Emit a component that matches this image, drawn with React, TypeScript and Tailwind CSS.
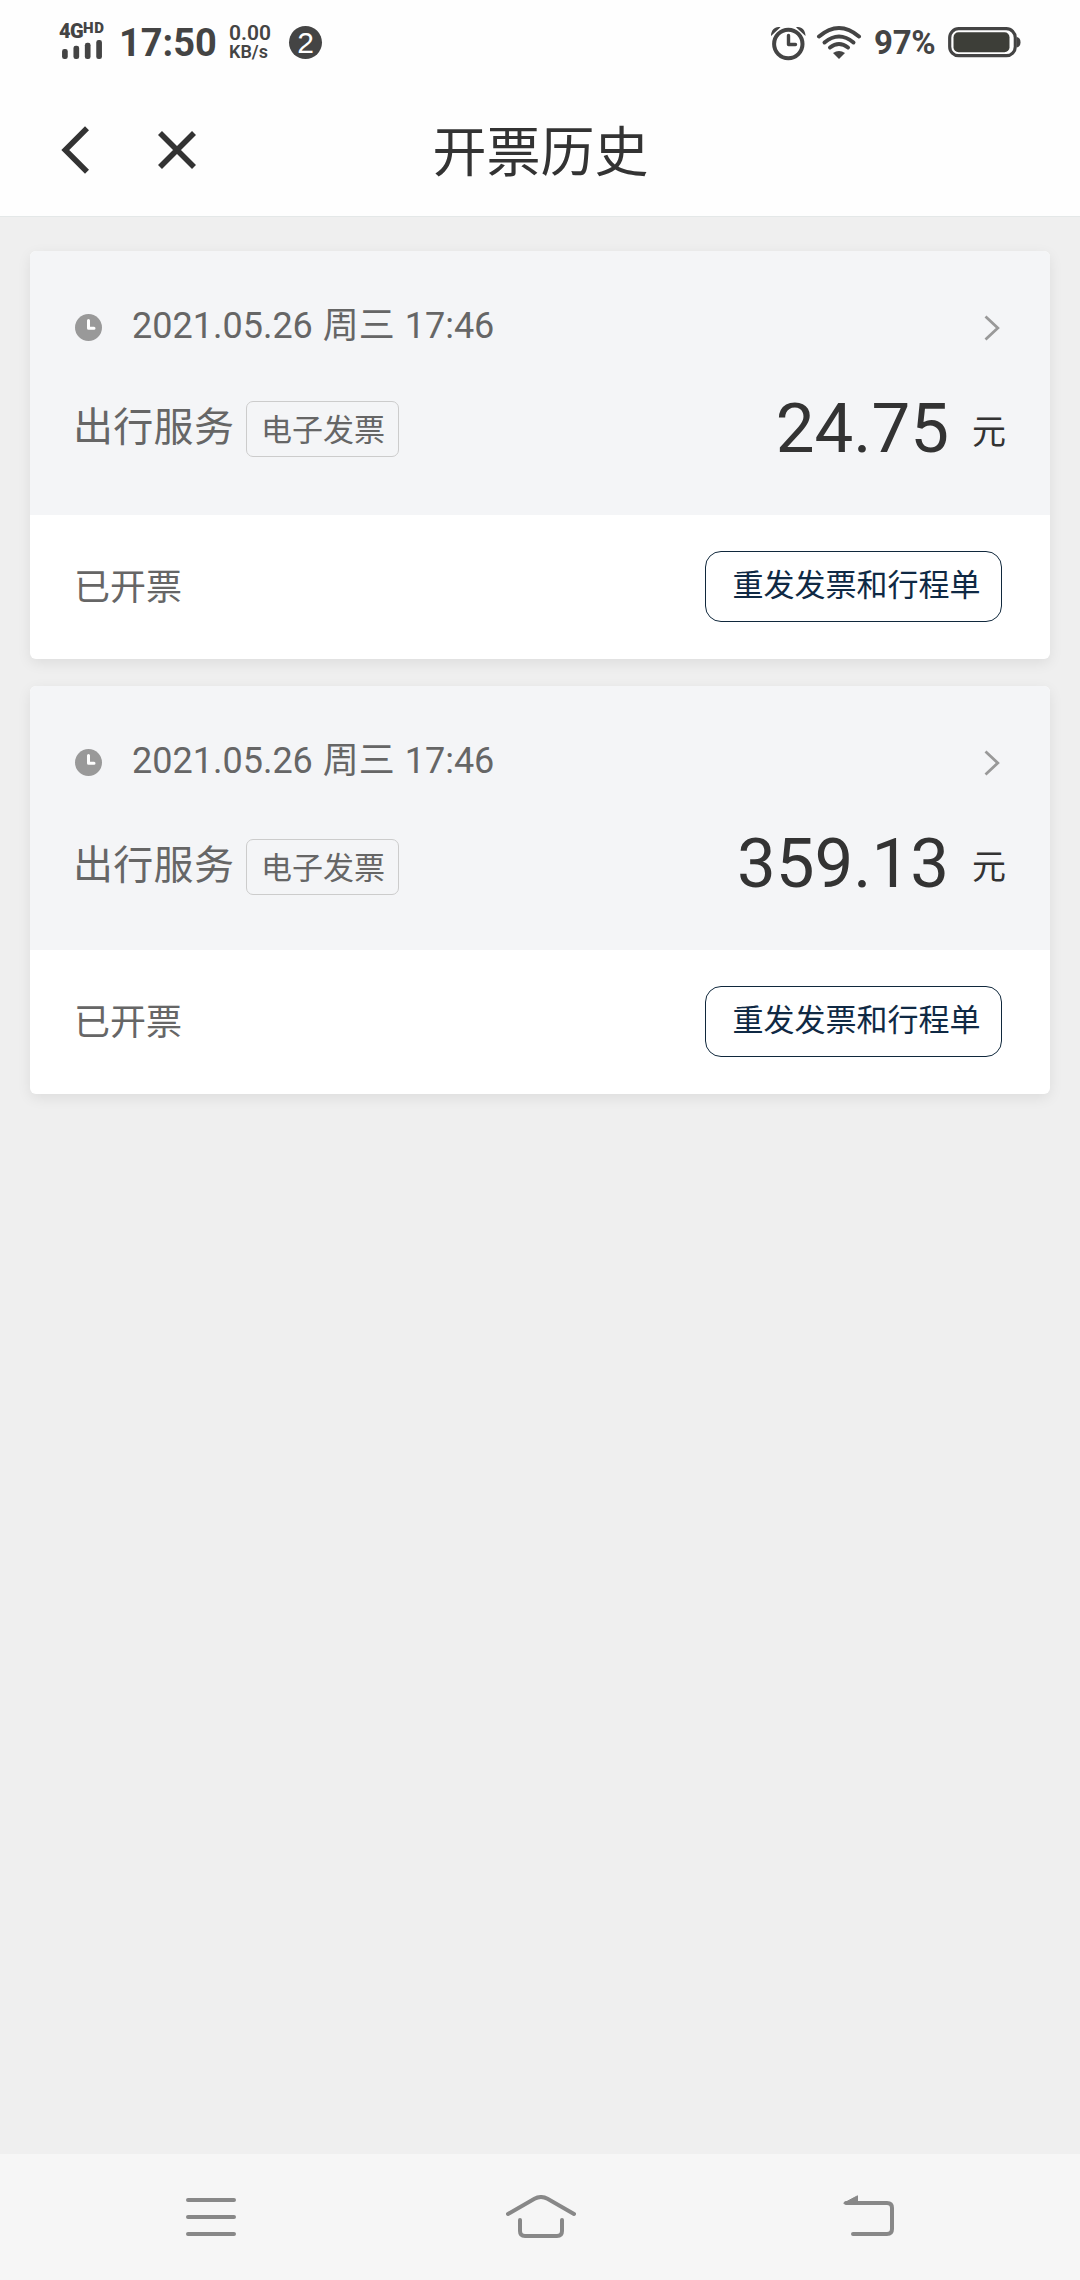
const RECORDS = [
  {
    id: 1,
    date: "2021.05.26 周三 17:46",
    service: "出行服务",
    tag: "电子发票",
    amount: "24.75",
    status: "已开票",
    rowClass: "pt-[54px]",
  },
  {
    id: 2,
    date: "2021.05.26 周三 17:46",
    service: "出行服务",
    tag: "电子发票",
    amount: "359.13",
    status: "已开票",
    rowClass: "pt-[57px]",
  },
];

function StatusBar() {
  return (
    <div className="flex h-[84px] items-center justify-between pl-[60px] pr-[59px] pt-px text-[#444]">
      <div className="flex items-center">
        {/* Signal */}
        <div className="-mt-[3px] flex h-[36px] w-[46px] flex-col justify-between">
          <div className="-ml-px flex items-start font-black">
            <span className="w-[24px] text-[20px] leading-[17px] tracking-[-0.5px]">4G</span>
            <span className="text-[15px] leading-[11px] tracking-[0.6px]">HD</span>
          </div>
          <svg width="44" height="20" viewBox="0 0 44 20" fill="currentColor">
            <rect x="1" y="9.5" width="6" height="10.5" rx="2.5" />
            <rect x="13" y="6" width="6" height="14" rx="2.5" />
            <rect x="25" y="3" width="6" height="17" rx="2.5" />
            <rect x="37" y="0" width="6" height="20" rx="2.5" />
          </svg>
        </div>
        <span className="ml-[13px] w-[97px] whitespace-nowrap pt-px text-[38px] font-bold leading-[40px]">17:50</span>
        <div className="-mt-[2px] ml-[13px] flex w-[60px] flex-col whitespace-nowrap font-semibold">
          <span className="text-[21px] leading-[20px]">0.00</span>
          <span className="text-[18px] leading-[18px]">KB/s</span>
        </div>
        <div className="flex size-[33px] items-center justify-center rounded-full bg-[#444] font-['Liberation_Sans',sans-serif] text-[30px] leading-none text-white">
          2
        </div>
      </div>

      <div className="flex items-center">
        {/* Alarm */}
        <svg width="36" height="36" viewBox="0 0 36 36" fill="none" stroke="currentColor">
          <circle cx="18.3" cy="19" r="14.2" strokeWidth="4" />
          <path d="M18.5 10.5v9h7" strokeWidth="3.4" strokeLinejoin="round" strokeLinecap="round" />
          <path d="M1 11C1 5 5 1 10.5 2.2ZM35.5 11C35.5 5 31.5 1 26 2.2Z" fill="currentColor" stroke="none" />
        </svg>
        {/* Wifi */}
        <svg className="ml-[10px]" width="46" height="36" viewBox="0 0 46 36" fill="none" stroke="currentColor" strokeWidth="4" strokeLinecap="round">
          <path d="M3 11.5Q23-5.5 43 11.5" />
          <path d="M8.5 17.5Q23 5.5 37.5 17.5" />
          <path d="M14 22.5Q23 15.5 32 22.5" />
          <path d="M17 28Q23 24 29 28L23 34Z" fill="currentColor" stroke="none" />
        </svg>
        <span className="ml-[12px] w-[62px] whitespace-nowrap pt-px text-[33px] font-bold leading-[38px] tracking-[-0.3px]">97%</span>
        {/* Battery */}
        <svg className="-mt-[2px] ml-[12px]" width="73" height="32" viewBox="0 0 73 32">
          <rect x="1.7" y="2.7" width="65.6" height="27" rx="9" fill="none" stroke="currentColor" strokeWidth="3.2" />
          <rect x="5.5" y="6.2" width="56" height="20" rx="5" fill="#3d3e38" />
          <path d="M69 11Q72.5 12 72.5 16.2T69 21.5Z" fill="currentColor" />
        </svg>
      </div>
    </div>
  );
}

function Header() {
  return (
    <header className="grid h-[133px] grid-cols-3 border-b border-[#e4e8e8] text-[#333]">
      <div className="flex items-center pl-[60px]">
        <svg width="30" height="50" viewBox="0 0 30 50" fill="none" stroke="currentColor" strokeWidth="5.6">
          <path d="M27 3.2L5.3 25L27 46.8" />
        </svg>
        <svg className="ml-[67px]" width="40" height="40" viewBox="0 0 40 40" fill="none" stroke="currentColor" strokeWidth="5.6">
          <path d="M3 3L37 37M37 3L3 37" />
        </svg>
      </div>
      <h1 className="mt-[40px] whitespace-nowrap pl-px text-center text-[54px] leading-[60px]">开票历史</h1>
    </header>
  );
}

function RecordCard({ record }: { record: (typeof RECORDS)[number] }) {
  return (
    <article className="overflow-hidden rounded-[6px] bg-white shadow-[0_4px_14px_rgba(0,0,0,0.08)]">
      <div className="h-[264px] bg-[#f4f5f7] pl-[45px] pr-[44px] pt-[56px]">
        <div className="flex h-[40px] items-center text-[#666]">
          <svg width="27" height="27" viewBox="0 0 27 27">
            <circle cx="13.5" cy="13.5" r="13.5" fill="#999" />
            <path d="M13.5 6.5V14.3H19" fill="none" stroke="#fff" strokeWidth="3" strokeLinecap="round" strokeLinejoin="round" />
          </svg>
          <span className="-mt-[3px] ml-[30px] whitespace-nowrap text-[36px] leading-[40px] [word-spacing:1px]">{record.date}</span>
          <svg className="ml-auto mr-[6px] mt-[2px]" width="16" height="26" viewBox="0 0 16 26" fill="none" stroke="#999" strokeWidth="2.8">
            <path d="M1.5 1.5L13.8 13L1.5 24.5" />
          </svg>
        </div>

        <div className="flex justify-between">
          <div className={`flex items-start ${record.rowClass}`}>
            <span className="-ml-[2px] w-[173px] whitespace-nowrap pt-[2px] text-[40px] leading-[50px] tracking-[0.3px] text-[#666]">{record.service}</span>
            <span className="flex h-[56px] w-[153px] items-center justify-center rounded-[7px] border border-[#ccc] pl-px pt-[3px] text-[31px] leading-[40px] text-[#666]">
              {record.tag}
            </span>
          </div>
          <div className="flex items-start pt-[42px] text-[#333]">
            <span className="text-[69px] leading-[80px]">{record.amount}</span>
            <span className="ml-[23px] mt-[23px] text-[34px] leading-[40px]">元</span>
          </div>
        </div>
      </div>

      <div className="flex h-[144px] items-center justify-between pl-[44px] pr-[48px]">
        <span className="pt-px text-[36px] leading-[40px] text-[#666]">{record.status}</span>
        <button className="-mt-px h-[71px] w-[297px] rounded-[16px] border border-[#10283c] pl-[6px] pb-[2px] text-[31px] leading-[66px] text-[#0f2944]">
          重发发票和行程单
        </button>
      </div>
    </article>
  );
}

function NavBar() {
  return (
    <nav className="flex h-[126px] items-center justify-between bg-[#f6f6f6] pl-[186px] pr-[185px] text-[#888]">
      <svg width="50" height="44" viewBox="0 0 50 44" fill="none" stroke="currentColor" strokeWidth="4" strokeLinecap="round">
        <path d="M2 5H48M2 22H48M2 39H48" />
      </svg>
      <svg className="ml-[2px]" width="70" height="44" viewBox="0 0 70 44" fill="none" stroke="currentColor" strokeWidth="4" strokeLinecap="round">
        <path d="M2 19L28.5 3.8Q35 0.2 41.5 3.8L68 19" />
        <path d="M14 25V36Q14 41 19 41H51Q56 41 56 36V25" />
      </svg>
      <svg width="52" height="44" viewBox="0 0 52 44" fill="none" stroke="currentColor" strokeWidth="4" strokeLinecap="round">
        <path d="M3 8H44Q49 8 49 13V34Q49 39 44 39H10" />
        <path d="M1 8L14.5 0.8V8Z" fill="currentColor" strokeWidth="1" strokeLinejoin="round" />
      </svg>
    </nav>
  );
}

export default function App() {
  return (
    <div className="flex h-[2280px] w-[1080px] flex-col bg-[#efefef] font-['Roboto','Noto_Sans_CJK_SC',sans-serif]">
      <div className="bg-[#fefefe]">
        <StatusBar />
        <Header />
      </div>
      <main className="flex flex-1 flex-col gap-[27px] px-[30px] pt-[34px]">
        {RECORDS.map((r) => (
          <RecordCard key={r.id} record={r} />
        ))}
      </main>
      <NavBar />
    </div>
  );
}
